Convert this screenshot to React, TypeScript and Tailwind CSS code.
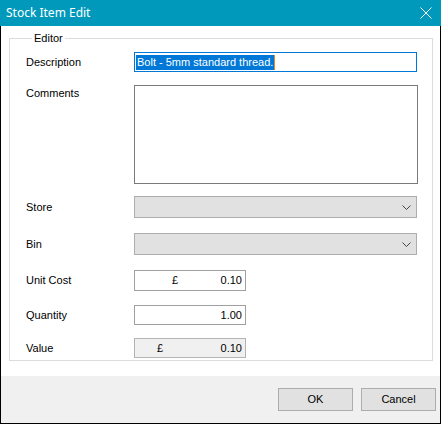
import React from 'react';

const font = { fontFamily: '"Liberation Sans", Arial, sans-serif' };

const Chevron: React.FC = () => (
    <svg width="9" height="5" viewBox="0 0 9 5" className="shrink-0">
        <path d="M0.5 0.5 L4.5 4.5 L8.5 0.5" fill="none" stroke="#444" strokeWidth="1" />
    </svg>
);

const Label: React.FC<{ children: React.ReactNode; top?: boolean }> = ({ children, top }) => (
    <div className={`text-[11px] text-black ${top ? 'self-start' : 'self-center'}`}>{children}</div>
);

const ComboBox: React.FC = () => (
    <div className="h-[22px] w-[283px] bg-[#e1e1e1] border border-[#adadad] flex items-center justify-end pr-[5px]">
        <Chevron />
    </div>
);

export default function App() {
    return (
        <div className="w-[441px] h-[424px] flex flex-col bg-white select-none" style={font}>
            {/* title bar */}
            <div className="h-[26px] bg-[#0099bc] flex items-center justify-between pl-[6px] pr-[9px] shrink-0">
                <span className="text-[12px] text-white" style={{ fontFamily: '"Noto Sans", "Open Sans", sans-serif' }}>
                    Stock Item Edit
                </span>
                <svg width="12" height="12" viewBox="0 0 12 12">
                    <path d="M0.5 0.5 L11.5 11.5 M11.5 0.5 L0.5 11.5" stroke="white" strokeWidth="1" />
                </svg>
            </div>

            <div className="flex-1 flex flex-col border-x border-b border-black">
                <div className="flex-1 pt-[6px] pl-[8px] pr-[7px]">
                    <fieldset className="border border-[#dcdcdc] h-[329px] pl-[16px] pt-[8px]">
                        <legend className="text-[11px] text-black ml-[6px] px-[2px] leading-[12px]">Editor</legend>
                        <div className="grid grid-cols-[108px_1fr]">
                            <Label>Description</Label>
                            <div className="h-[20px] w-[283px] border border-[#0078d7] flex items-center pl-[1px]">
                                <span className="bg-[#0078d7] text-white text-[11px] leading-[15px] px-[1px]">
                                    Bolt - 5mm standard thread.
                                </span>
                                <span className="w-[1px] h-[15px] bg-[#e08a2a]" />
                            </div>

                            <div className="h-[13px] col-span-2" />
                            <Label top>Comments</Label>
                            <div className="h-[99px] w-[284px] border border-[#7a7a7a] bg-white" />

                            <div className="h-[12px] col-span-2" />
                            <Label>Store</Label>
                            <ComboBox />

                            <div className="h-[15px] col-span-2" />
                            <Label>Bin</Label>
                            <ComboBox />

                            <div className="h-[15px] col-span-2" />
                            <Label>Unit Cost</Label>
                            <div className="h-[21px] w-[112px] border border-[#a0a0a0] bg-white flex items-center text-[11px] pr-[3px]">
                                <span className="ml-[37px]">£</span>
                                <span className="ml-auto">0.10</span>
                            </div>

                            <div className="h-[14px] col-span-2" />
                            <Label>Quantity</Label>
                            <div className="h-[20px] w-[112px] border border-[#a0a0a0] bg-white flex items-center justify-end text-[11px] pr-[3px]">
                                1.00
                            </div>

                            <div className="h-[13px] col-span-2" />
                            <Label>Value</Label>
                            <div className="h-[20px] w-[112px] border border-[#b4b4b4] bg-[#f0f0f0] flex items-center text-[11px] pr-[3px]">
                                <span className="ml-[22px]">£</span>
                                <span className="ml-auto">0.10</span>
                            </div>
                        </div>
                    </fieldset>
                </div>

                <div className="h-[47px] bg-[#f0f0f0] flex items-start justify-end gap-[8px] pt-[12px] pr-[4px] shrink-0">
                    <button className="w-[75px] h-[23px] bg-[#e1e1e1] border border-[#adadad] text-[11px] text-black">OK</button>
                    <button className="w-[75px] h-[23px] bg-[#e1e1e1] border border-[#adadad] text-[11px] text-black">Cancel</button>
                </div>
            </div>
        </div>
    );
}
